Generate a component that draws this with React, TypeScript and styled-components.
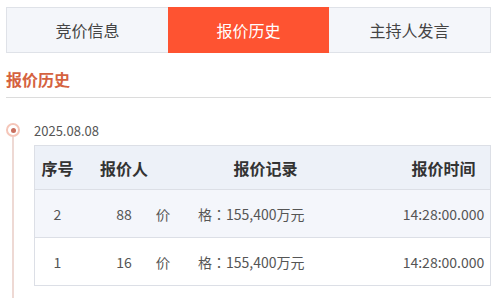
import React from "react";
import styled, { createGlobalStyle } from "styled-components";

const GlobalStyle = createGlobalStyle`
    body {
        margin: 0;
        background: #fff;
        font-family: "Noto Sans CJK SC", "Noto Sans", sans-serif;
    }
`;

const Page = styled.div`
    width: 502px;
    height: 304px;
    box-sizing: border-box;
    padding: 7px 11px 0 6px;
    overflow: hidden;
`;

const Tabs = styled.div`
    display: flex;
    height: 46px;
    border: 1px solid #dfe2e8;
    box-sizing: border-box;
    background: #f4f6fa;
`;

const Tab = styled.div<{ $active?: boolean }>`
    flex: 1;
    display: flex;
    align-items: center;
    justify-content: center;
    font-size: 16px;
    color: ${(p) => (p.$active ? "#fff" : "#444")};
    background: ${(p) => (p.$active ? "#fe5331" : "transparent")};
    margin: ${(p) => (p.$active ? "-1px 0" : "0")};
`;

const Heading = styled.h2`
    margin: 14px 0 0;
    padding-bottom: 6px;
    font-size: 16px;
    line-height: 24px;
    font-weight: 700;
    color: #d5623f;
    border-bottom: 1px solid #dcdcdc;
`;

const Timeline = styled.div`
    display: flex;
`;

const Rail = styled.div`
    width: 14px;
    margin-right: 14px;
    display: flex;
    flex-direction: column;
    align-items: center;
`;

const Dot = styled.div`
    margin-top: 25px;
    width: 14px;
    height: 14px;
    box-sizing: border-box;
    border-radius: 50%;
    border: 2px solid #f5c6b9;
    background: #fff;
    display: flex;
    align-items: center;
    justify-content: center;

    &::after {
        content: "";
        width: 5px;
        height: 5px;
        border-radius: 50%;
        background: #c9705f;
    }
`;

const Line = styled.div`
    flex: 1;
    width: 2px;
    background: #eed9d4;
`;

const Content = styled.div`
    flex: 1;
    padding-bottom: 12px;
`;

const DateLabel = styled.div`
    margin-top: 23px;
    font-size: 13px;
    line-height: 20px;
    color: #555;
`;

const Table = styled.div`
    margin-top: 4px;
    border: 1px solid #dcdfe6;
    border-bottom: none;
`;

const Row = styled.div<{ $head?: boolean; $shade?: boolean }>`
    display: grid;
    grid-template-columns: 45px 76px 1fr 93px;
    align-items: center;
    height: ${(p) => (p.$head ? "43px" : "47px")};
    border-bottom: 1px solid #dcdfe6;
    background: ${(p) => (p.$head ? "#edf1f8" : p.$shade ? "#f4f6fb" : "#fff")};
    font-size: ${(p) => (p.$head ? "16px" : "14px")};
    font-weight: ${(p) => (p.$head ? 700 : 400)};
    color: ${(p) => (p.$head ? "#333" : "#555")};
`;

const Cell = styled.div<{ $align?: string; $pad?: string }>`
    text-align: ${(p) => p.$align || "center"};
    padding: ${(p) => p.$pad || "0"};
    white-space: nowrap;
`;

const Record = styled(Cell)`
    font-family: "Noto Sans CJK JP", "Noto Sans CJK SC", sans-serif;
`;

const FieldLabel = styled.span`
    display: inline-block;
    width: 56px;
    text-align: justify;
    text-align-last: justify;
`;

const rows = [
  { no: 2, bidder: 88, price: "155,400万元", time: "14:28:00.000" },
  { no: 1, bidder: 16, price: "155,400万元", time: "14:28:00.000" },
];

const tabs = ["竞价信息", "报价历史", "主持人发言"];

const App = () => {
  return (
    <Page>
      <GlobalStyle />
      <Tabs>
        {tabs.map((t) => (
          <Tab key={t} $active={t === "报价历史"}>
            {t}
          </Tab>
        ))}
      </Tabs>
      <Heading>报价历史</Heading>
      <Timeline>
        <Rail>
          <Dot />
          <Line />
        </Rail>
        <Content>
          <DateLabel>2025.08.08</DateLabel>
          <Table>
            <Row $head>
              <Cell>序号</Cell>
              <Cell $pad="0 0 0 12px">报价人</Cell>
              <Cell $pad="0 22px 0 0">报价记录</Cell>
              <Cell>报价时间</Cell>
            </Row>
            {rows.map((r, i) => (
              <Row key={r.no} $shade={i === 0}>
                <Cell>{r.no}</Cell>
                <Cell $pad="0 0 0 12px">{r.bidder}</Cell>
                <Record $align="left">
                  <FieldLabel>价格</FieldLabel>：{r.price}
                </Record>
                <Cell>{r.time}</Cell>
              </Row>
            ))}
          </Table>
        </Content>
      </Timeline>
    </Page>
  );
};

export default App;
